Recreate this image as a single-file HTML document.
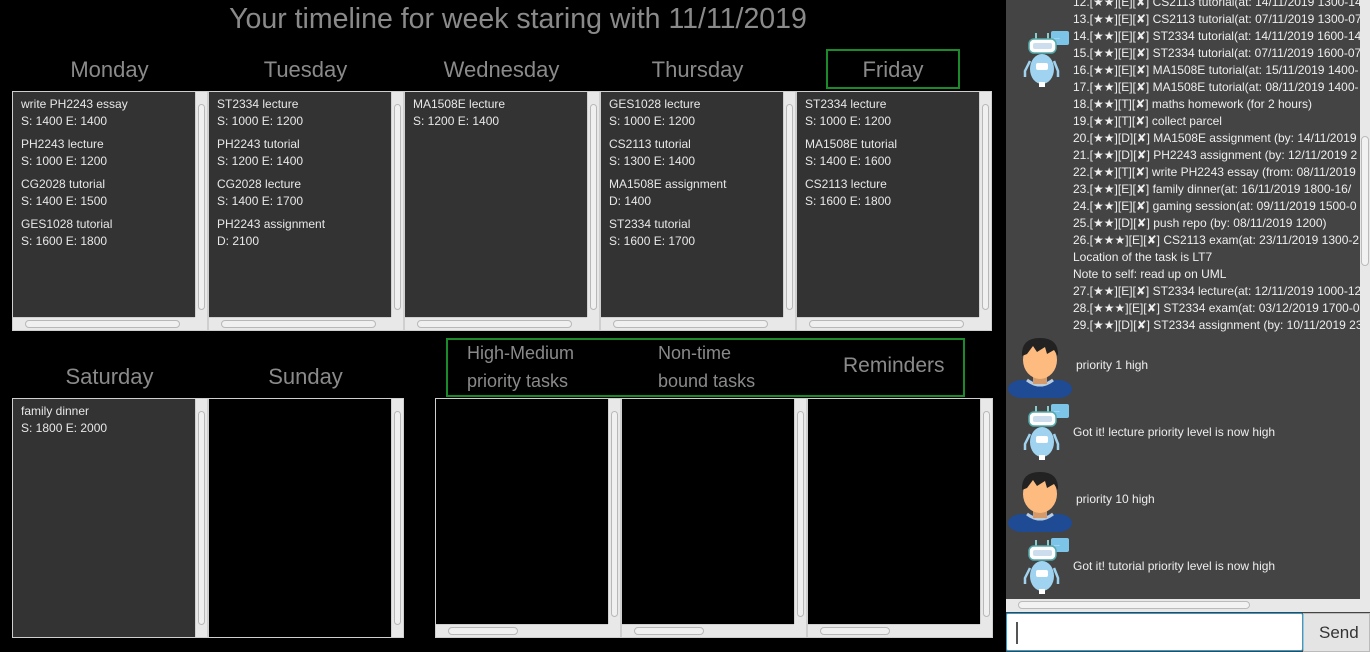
<!DOCTYPE html>
<html><head><meta charset="utf-8"><style>
*{margin:0;padding:0;box-sizing:border-box}
body{width:1370px;height:652px;background:#000;position:relative;overflow:hidden;font-family:"Liberation Sans","DejaVu Sans",sans-serif}
.a{position:absolute}
.t{color:#8a8a8a;font-size:22px;text-align:center}
.list{position:absolute;border:1px solid #cfcfcf;background:#333}
.list.blk{background:#000}
.vs{position:absolute;top:0;right:0;width:12px;bottom:0;background:#e8e8e8;border-left:1px solid #d0d0d0}
.vs .th{position:absolute;left:2px;right:2px;top:12px;bottom:20px;border:1px solid #b8b8b8;border-radius:4px;background:#f0f0f0}
.hs{position:absolute;left:0;right:12px;bottom:0;height:13px;background:#e8e8e8;border-top:1px solid #d0d0d0}
.hs .th{position:absolute;left:12px;top:2px;height:8px;width:155px;border:1px solid #b8b8b8;border-radius:4px;background:#f0f0f0}
.corner{position:absolute;right:0;bottom:0;width:12px;height:13px;background:#e8e8e8}
.it{color:#e8e8e8;font-size:12px;line-height:17px;position:absolute;left:8px}
.chat{position:absolute;left:1073px;color:#eee;font-size:12px;white-space:nowrap}
</style></head><body>
<div class="a t" style="left:0;width:1036px;top:3px;font-size:28.5px;color:#8a8a8a">Your timeline for week staring with 11/11/2019</div>
<div class="a t" style="left:12px;width:195px;top:57px">Monday</div>
<div class="a t" style="left:208px;width:195px;top:57px">Tuesday</div>
<div class="a t" style="left:404px;width:195px;top:57px">Wednesday</div>
<div class="a t" style="left:600px;width:195px;top:57px">Thursday</div>
<div class="a" style="left:826px;top:49px;width:134px;height:40px;border:2px solid #1a8a2a"></div>
<div class="a t" style="left:826px;width:134px;top:57px">Friday</div>

<div class="list" style="left:12px;top:91px;width:196px;height:240px"><div class="vs"><div class="th"></div></div><div class="hs"><div class="th"></div></div><div class="corner"></div>
<div class="it" style="top:4px">write PH2243 essay<br>S: 1400 E: 1400</div>
<div class="it" style="top:44px">PH2243 lecture<br>S: 1000 E: 1200</div>
<div class="it" style="top:84px">CG2028 tutorial<br>S: 1400 E: 1500</div>
<div class="it" style="top:124px">GES1028 tutorial<br>S: 1600 E: 1800</div></div>
<div class="list" style="left:208px;top:91px;width:196px;height:240px"><div class="vs"><div class="th"></div></div><div class="hs"><div class="th"></div></div><div class="corner"></div>
<div class="it" style="top:4px">ST2334 lecture<br>S: 1000 E: 1200</div>
<div class="it" style="top:44px">PH2243 tutorial<br>S: 1200 E: 1400</div>
<div class="it" style="top:84px">CG2028 lecture<br>S: 1400 E: 1700</div>
<div class="it" style="top:124px">PH2243 assignment<br>D: 2100</div></div>
<div class="list" style="left:404px;top:91px;width:196px;height:240px"><div class="vs"><div class="th"></div></div><div class="hs"><div class="th"></div></div><div class="corner"></div>
<div class="it" style="top:4px">MA1508E lecture<br>S: 1200 E: 1400</div></div>
<div class="list" style="left:600px;top:91px;width:196px;height:240px"><div class="vs"><div class="th"></div></div><div class="hs"><div class="th"></div></div><div class="corner"></div>
<div class="it" style="top:4px">GES1028 lecture<br>S: 1000 E: 1200</div>
<div class="it" style="top:44px">CS2113 tutorial<br>S: 1300 E: 1400</div>
<div class="it" style="top:84px">MA1508E assignment<br>D: 1400</div>
<div class="it" style="top:124px">ST2334 tutorial<br>S: 1600 E: 1700</div></div>
<div class="list" style="left:796px;top:91px;width:196px;height:240px"><div class="vs"><div class="th"></div></div><div class="hs"><div class="th"></div></div><div class="corner"></div>
<div class="it" style="top:4px">ST2334 lecture<br>S: 1000 E: 1200</div>
<div class="it" style="top:44px">MA1508E tutorial<br>S: 1400 E: 1600</div>
<div class="it" style="top:84px">CS2113 lecture<br>S: 1600 E: 1800</div></div>

<div class="a t" style="left:12px;width:195px;top:364px">Saturday</div>
<div class="a t" style="left:208px;width:195px;top:364px">Sunday</div>
<div class="a" style="left:446px;top:338px;width:519px;height:59px;border:2px solid #1a8a2a"></div>
<div class="a" style="left:467px;top:339px;color:#8a8a8a;font-size:18px;line-height:28px">High-Medium<br>priority tasks</div>
<div class="a" style="left:658px;top:339px;color:#8a8a8a;font-size:18px;line-height:28px">Non-time<br>bound tasks</div>
<div class="a" style="left:843px;top:354px;color:#8a8a8a;font-size:21px">Reminders</div>

<div class="list" style="left:12px;top:398px;width:196px;height:240px"><div class="vs"><div class="th" style="bottom:12px"></div></div>
<div class="it" style="top:4px">family dinner<br>S: 1800 E: 2000</div></div>
<div class="list blk" style="left:208px;top:398px;width:196px;height:240px"><div class="vs"><div class="th" style="bottom:12px"></div></div></div>
<div class="list blk" style="left:435px;top:398px;width:186px;height:240px"><div class="vs"><div class="th"></div></div><div class="hs"><div class="th" style="width:70px"></div></div><div class="corner"></div></div>
<div class="list blk" style="left:621px;top:398px;width:186px;height:240px"><div class="vs"><div class="th"></div></div><div class="hs"><div class="th" style="width:70px"></div></div><div class="corner"></div></div>
<div class="list blk" style="left:807px;top:398px;width:186px;height:240px"><div class="vs"><div class="th"></div></div><div class="hs"><div class="th" style="width:70px"></div></div><div class="corner"></div></div>

<div class="a" style="left:1006px;top:0;width:364px;height:652px;background:#444"></div>
<div class="a" style="left:1006px;top:599px;width:364px;height:13px;background:#e8e8e8"><div class="a" style="left:12px;top:2px;width:232px;height:8px;border:1px solid #bbb;border-radius:4px;background:#f2f2f2"></div></div>
<div class="a" style="left:1006px;top:613px;width:297px;height:38px;background:#fff;border:1px solid #2aa0d8;border-radius:2px"><div class="a" style="left:9px;top:8px;width:2px;height:22px;background:#555"></div></div>
<div class="a" style="left:1303px;top:613px;width:67px;height:39px;background:#e4e4e4;border:1px solid #bbb;color:#333;font-size:17px;line-height:37px;padding-left:15px">Send</div>

<div class="chat" style="top:-6px;font-size:12px;line-height:17px">12.[★★][E][✘] CS2113 tutorial(at: 14/11/2019 1300-14<br>13.[★★][E][✘] CS2113 tutorial(at: 07/11/2019 1300-07<br>14.[★★][E][✘] ST2334 tutorial(at: 14/11/2019 1600-14<br>15.[★★][E][✘] ST2334 tutorial(at: 07/11/2019 1600-07<br>16.[★★][E][✘] MA1508E tutorial(at: 15/11/2019 1400-<br>17.[★★][E][✘] MA1508E tutorial(at: 08/11/2019 1400-<br>18.[★★][T][✘] maths homework (for 2 hours)<br>19.[★★][T][✘] collect parcel<br>20.[★★][D][✘] MA1508E assignment (by: 14/11/2019<br>21.[★★][D][✘] PH2243 assignment (by: 12/11/2019 2<br>22.[★★][T][✘] write PH2243 essay (from: 08/11/2019<br>23.[★★][E][✘] family dinner(at: 16/11/2019 1800-16/<br>24.[★★][E][✘] gaming session(at: 09/11/2019 1500-0<br>25.[★★][D][✘] push repo (by: 08/11/2019 1200)<br>26.[★★★][E][✘] CS2113 exam(at: 23/11/2019 1300-2<br>Location of the task is LT7<br>Note to self: read up on UML<br>27.[★★][E][✘] ST2334 lecture(at: 12/11/2019 1000-12<br>28.[★★★][E][✘] ST2334 exam(at: 03/12/2019 1700-0<br>29.[★★][D][✘] ST2334 assignment (by: 10/11/2019 23</div>
<div class="a" style="left:1360px;top:0;width:10px;height:599px;background:#e8e8e8"><div class="a" style="left:1px;right:1px;top:136px;height:130px;border:1px solid #bbb;border-radius:4px;background:#f2f2f2"></div></div>

<svg class="a" style="left:1005px;top:0" width="355" height="600">
<defs>
<g id="bot"><rect x="36" y="6" width="18" height="14" rx="2" fill="#7cc4e8"/><text x="39" y="14" font-size="7" fill="#fff">...</text>
<line x1="21" y1="8" x2="21" y2="14" stroke="#8cc" stroke-width="2"/><line x1="33" y1="8" x2="33" y2="14" stroke="#8cc" stroke-width="2"/>
<rect x="14" y="14" width="27" height="14" rx="5" fill="#fff" stroke="#5aa" stroke-width="1.5"/><rect x="18" y="18" width="19" height="6" rx="2" fill="#cde"/>
<ellipse cx="27" cy="44" rx="12" ry="15" fill="#9fd3ef"/><rect x="21" y="38" width="12" height="7" rx="2" fill="#fff"/>
<rect x="24" y="57" width="6" height="5" fill="#fff"/>
<path d="M15 36 L10 46 L10 52 M39 36 L43 46 L43 52" stroke="#9fd3ef" stroke-width="2.5" fill="none"/></g>
<g id="usr"><rect x="1" y="50" width="64" height="18" rx="14" fill="#1f4a94"/><path d="M20 50 Q33 60 46 50" stroke="#bcd" stroke-width="3" fill="none"/><rect x="26" y="40" width="14" height="14" fill="#d49a6a"/><ellipse cx="33" cy="30" rx="17" ry="19" fill="#fdbb80"/><path d="M15 26 Q14 8 33 8 Q52 8 51 26 L47 20 L40 24 L38 17 L30 22 L26 16 L20 24 Z" fill="#222"/></g>
</defs>
<use href="#bot" x="10" y="25"/>
<use href="#usr" x="2" y="330"/>
<use href="#bot" x="10" y="398"/>
<use href="#usr" x="2" y="464"/>
<use href="#bot" x="10" y="532"/>
</svg>
<div class="chat" style="top:358px;left:1076px">priority 1 high</div>
<div class="chat" style="top:425px">Got it! lecture priority level is now high</div>
<div class="chat" style="top:492px;left:1076px">priority 10 high</div>
<div class="chat" style="top:559px">Got it! tutorial priority level is now high</div>
</body></html>
